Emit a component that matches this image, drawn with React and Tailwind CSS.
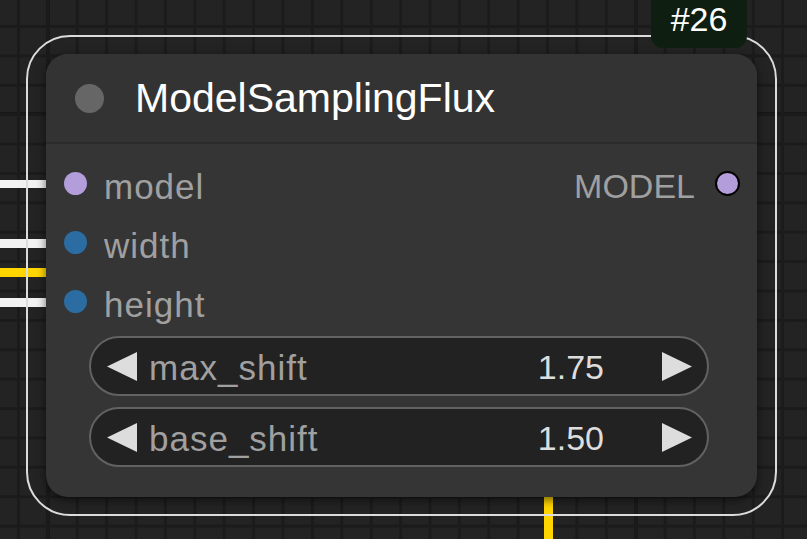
import React from 'react';

const inputs = [
  { name: 'model', color: 'bg-[#b39ddb]' },
  { name: 'width', color: 'bg-[#2b6ca3]' },
  { name: 'height', color: 'bg-[#2b6ca3]' },
];

const widgets = [
  { name: 'max_shift', value: '1.75' },
  { name: 'base_shift', value: '1.50' },
];

const Arrow = ({ dir }) => (
  <svg width="30" height="29" viewBox="0 0 30 29" className="shrink-0">
    {dir === 'left' ? (
      <polygon points="30,0 30,29 0,14.5" fill="#dddddd" />
    ) : (
      <polygon points="0,0 0,29 30,14.5" fill="#dddddd" />
    )}
  </svg>
);

export default function App() {
  return (
    <div
      className="relative w-[807px] h-[539px] overflow-hidden bg-[#232323] bg-[image:linear-gradient(to_right,#1b1b1b_3px,transparent_3px),linear-gradient(to_bottom,#1b1b1b_3px,transparent_3px),linear-gradient(to_right,#171717_4px,transparent_4px),linear-gradient(to_bottom,#171717_4px,transparent_4px)] bg-[size:29.4px_29.4px,29.4px_29.4px,588px_588px,588px_588px] bg-[position:17px_0,0_25px,46px_0,0_112px]"
      style={{ fontFamily: '"Liberation Sans", Arial, sans-serif' }}
    >
      {/* links coming into the node */}
      <div className="absolute left-0 top-[180px] w-[46px] h-[8px] bg-[#f2f2f2]" />
      <div className="absolute left-0 top-[239px] w-[46px] h-[9px] bg-[#f2f2f2]" />
      <div className="absolute left-0 top-[268px] w-[46px] h-[9px] bg-[#ffd500]" />
      <div className="absolute left-0 top-[298px] w-[46px] h-[9px] bg-[#f2f2f2]" />
      <div className="absolute left-[544px] top-[490px] w-[9px] h-[60px] bg-[#ffd500]" />

      {/* selection outline */}
      <div className="absolute left-[26px] top-[35px] w-[751px] h-[481px] rounded-[44px] border-2 border-[#dcdcdc]" />

      {/* node */}
      <div className="absolute left-[46px] top-[54px] w-[711px] h-[443px] rounded-[22px] bg-[#353535] shadow-[0_3px_10px_rgba(0,0,0,0.55)] flex flex-col">
        <div className="h-[90px] shrink-0 flex items-center pl-[29px] border-b-2 border-[#2b2b2b] bg-[#333333] rounded-t-[22px]">
          <span className="w-[29px] h-[29px] rounded-full bg-[#666666] shrink-0" />
          <span className="ml-[31px] text-[41px] leading-none text-white">ModelSamplingFlux</span>
        </div>

        <div className="flex flex-col pt-[10px]">
          {inputs.map((slot, i) => (
            <div key={slot.name} className="h-[59px] flex items-center pl-[18px] pr-[17px]">
              <span className={`w-[23px] h-[23px] rounded-full shrink-0 ${slot.color}`} />
              <span className="ml-[17px] mt-[5px] text-[35px] leading-none tracking-[1px] text-[#a0a0a0]">
                {slot.name}
              </span>
              {i === 0 && (
                <div className="ml-auto flex items-center">
                  <span className="mt-[5px] text-[34px] leading-none text-[#a0a0a0]">MODEL</span>
                  <span className="ml-[20px] w-[25px] h-[25px] rounded-full bg-[#b39ddb] border-2 border-black" />
                </div>
              )}
            </div>
          ))}
        </div>

        <div className="flex flex-col gap-[11px] mt-[5px] ml-[43px] w-[620px]">
          {widgets.map((w) => (
            <div
              key={w.name}
              className="h-[60px] rounded-full border-2 border-[#626262] bg-[#222222] flex items-center pl-[16px] pr-[15px]"
            >
              <Arrow dir="left" />
              <span className="ml-[12px] mt-[2px] text-[35px] leading-none tracking-[1px] text-[#a0a0a0]">
                {w.name}
              </span>
              <span className="ml-auto mt-[2px] text-[34px] leading-none text-[#dddddd]">{w.value}</span>
              <span className="ml-[58px]">
                <Arrow dir="right" />
              </span>
            </div>
          ))}
        </div>
      </div>

      {/* node id badge */}
      <div className="absolute left-[651px] top-[-10px] w-[96px] h-[58px] rounded-[12px] bg-[#0e1f11] flex items-center justify-center">
        <span className="text-[34px] leading-none text-white">#26</span>
      </div>
    </div>
  );
}
